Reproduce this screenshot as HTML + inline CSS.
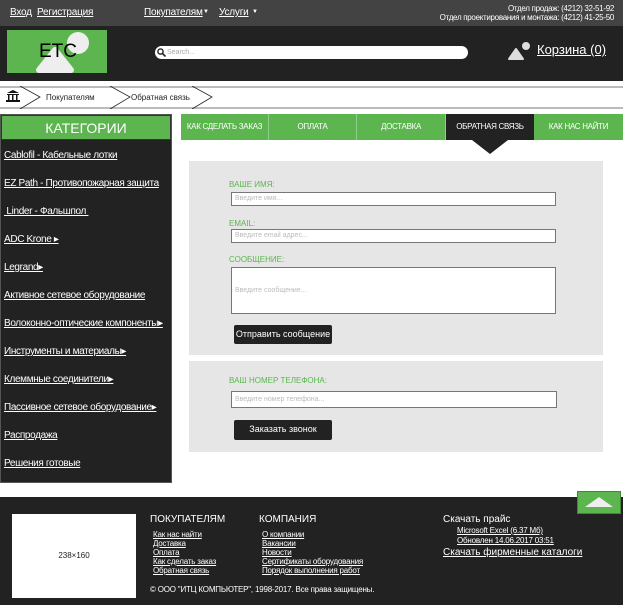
<!DOCTYPE html>
<html><head><meta charset="utf-8"><style>
*{margin:0;padding:0;box-sizing:border-box}
body{width:623px;height:605px;position:relative;background:#fff;font-family:"Liberation Sans",sans-serif;overflow:hidden;color:#fff}
a{color:inherit;text-decoration:underline;white-space:nowrap}
.abs{position:absolute}
#top{left:0;top:0;width:623px;height:26px;background:#434343;font-size:10px;letter-spacing:-0.2px}
#hdr{left:0;top:26px;width:623px;height:55px;background:#222}
#bc{left:0;top:86px;width:623px;height:23px;border-top:2px solid #bbb;border-bottom:2px solid #bbb;color:#222;font-size:8px}
#side{left:0;top:114px;width:172px;height:369px;background:#222;border:1px solid #555}
#side .h{height:25px;background:#5cb54f;text-align:center;font-size:14px;line-height:25px;border:1px solid #333}
#side a{position:absolute;left:3px;font-size:10px;letter-spacing:-0.35px;color:#fff}
.tab{position:absolute;top:114px;height:26px;background:#5cb54f;font-size:8px;letter-spacing:-0.3px;text-align:center;line-height:26px;border-right:1px solid #8fd088;white-space:nowrap}
.panel{position:absolute;left:189px;width:414px;background:#e6e6e6}
.lbl{position:absolute;left:40px;color:#5cb54f;font-size:8px}
.inp{position:absolute;left:42px;width:325px;background:#fff;border:1px solid #777;color:#bbb;font-size:7px;padding-left:3px}
.btn{position:absolute;left:45px;width:98px;height:19px;background:#222;border-radius:2px;font-size:9px;text-align:center;line-height:19px}
#foot{left:0;top:497px;width:623px;height:108px;background:#222}
#foot a,#foot div{position:absolute}
.fl{font-size:8px;letter-spacing:-0.2px}
</style></head><body>
<div id="top" class="abs">
<a class="abs" style="left:10px;top:7px">Вход</a><a class="abs" style="left:37px;top:7px">Регистрация</a>
<a class="abs" style="left:144px;top:7px">Покупателям</a><span class="abs" style="left:203px;top:9px;font-size:6px">▼</span>
<a class="abs" style="left:219px;top:7px">Услуги</a><span class="abs" style="left:252px;top:9px;font-size:6px">▼</span>
<div class="abs" style="right:9px;top:4px;font-size:8px;letter-spacing:-0.3px;text-align:right;line-height:9px">Отдел продаж: (4212) 32-51-92<br>Отдел проектирования и монтажа: (4212) 41-25-50</div>
</div>
<div id="hdr" class="abs">
<div class="abs" style="left:7px;top:4px;width:100px;height:43px;background:#5cb54f">
<svg width="100" height="43" style="position:absolute;left:0;top:0"><circle cx="71" cy="13" r="11" fill="#eee"/><path d="M32 40 L48 20 L64 40 Z" fill="#eee" stroke="#eee" stroke-width="6" stroke-linejoin="round"/></svg>
<span class="abs" style="left:32px;top:11px;color:#000;font-size:19px">ETC</span></div>
<div class="abs" style="left:155px;top:20px;width:313px;height:13px;background:#fff;border-radius:7px;color:#aaa;font-size:7px;line-height:13px;padding-left:12px">Search...
<svg width="9" height="9" style="position:absolute;left:2px;top:2px"><circle cx="3.5" cy="3.5" r="2.6" stroke="#222" stroke-width="1.4" fill="none"/><path d="M5.5 5.5L8.5 8.5" stroke="#222" stroke-width="1.6"/></svg></div>
<svg class="abs" style="left:506px;top:14px" width="26" height="22"><circle cx="20" cy="6" r="4" fill="#ddd"/><path d="M3 19 L10 9 L17 19Z" fill="#ddd" stroke="#ddd" stroke-width="2" stroke-linejoin="round"/></svg>
<a class="abs" style="left:537px;top:16px;font-size:13px">Корзина (0)</a>
</div>
<div id="bc" class="abs">
<svg class="abs" style="left:0;top:-2px" width="623" height="23"><g fill="none" stroke="#222" stroke-width="0.8"><path d="M20 0 L40 11 L20 23"/><path d="M110 0 L130 11 L110 23"/><path d="M192 0 L212 11 L192 23"/></g>
<g fill="#111"><path d="M7 7 L13 4 L19 7Z"/><rect x="7" y="8" width="12" height="1"/><rect x="8" y="9" width="1.5" height="5"/><rect x="12" y="9" width="1.5" height="5"/><rect x="16" y="9" width="1.5" height="5"/><rect x="6" y="14" width="14" height="2"/></g></svg>
<span class="abs" style="left:46px;top:5px">Покупателям</span><span class="abs" style="left:131px;top:5px">Обратная связь</span>
</div>
<div id="side" class="abs"><div class="h">КАТЕГОРИИ</div>
<a style="top:35px">Cablofil - Кабельные лотки</a>
<a style="top:63px">EZ Path - Противопожарная защита</a>
<a style="top:91px">&nbsp;Linder - Фальшпол&nbsp;</a>
<a style="top:119px">ADC Krone ▸</a>
<a style="top:147px">Legrand▸</a>
<a style="top:175px">Активное сетевое оборудование</a>
<a style="top:203px">Волоконно-оптические компоненты▸</a>
<a style="top:231px">Инструменты и материалы▸</a>
<a style="top:259px">Клеммные соединители▸</a>
<a style="top:287px">Пассивное сетевое оборудование▸</a>
<a style="top:315px">Распродажа</a>
<a style="top:343px">Решения готовые</a>
</div>
<div class="tab" style="left:181px;width:88px">КАК СДЕЛАТЬ ЗАКАЗ</div>
<div class="tab" style="left:269px;width:88px">ОПЛАТА</div>
<div class="tab" style="left:357px;width:89px">ДОСТАВКА</div>
<div class="tab" style="left:446px;width:88px;background:#222;border:none">ОБРАТНАЯ СВЯЗЬ</div>
<div class="tab" style="left:534px;width:89px;border:none">КАК НАС НАЙТИ</div>
<svg class="abs" style="left:472px;top:140px" width="36" height="15"><path d="M0 0H36L18 14Z" fill="#222"/></svg>
<div class="panel" style="top:161px;height:194px">
<span class="lbl" style="top:19px">ВАШЕ ИМЯ:</span>
<div class="inp" style="top:31px;height:14px;line-height:12px">Введите имя...</div>
<span class="lbl" style="top:58px">EMAIL:</span>
<div class="inp" style="top:68px;height:14px;line-height:12px">Введите email адрес...</div>
<span class="lbl" style="top:94px">СООБЩЕНИЕ:</span>
<div class="inp" style="top:106px;height:47px;line-height:45px">Введите сообщение...</div>
<div class="btn" style="top:164px">Отправить сообщение</div>
</div>
<div class="panel" style="top:361px;height:91px">
<span class="lbl" style="top:15px">ВАШ НОМЕР ТЕЛЕФОНА:</span>
<div class="inp" style="top:30px;height:17px;line-height:15px;width:326px">Введите номер телефона...</div>
<div class="btn" style="top:59px;height:20px">Заказать звонок</div>
</div>
<div id="foot" class="abs">
<div style="left:12px;top:17px;width:124px;height:84px;background:#fff;color:#222;font-size:8px;text-align:center;line-height:84px">238×160</div>
<div style="left:150px;top:17px;font-size:10px">ПОКУПАТЕЛЯМ</div>
<a class="fl" style="left:153px;top:33px">Как нас найти</a>
<a class="fl" style="left:153px;top:42px">Доставка</a>
<a class="fl" style="left:153px;top:51px">Оплата</a>
<a class="fl" style="left:153px;top:60px">Как сделать заказ</a>
<a class="fl" style="left:153px;top:69px">Обратная связь</a>
<div style="left:259px;top:17px;font-size:10px">КОМПАНИЯ</div>
<a class="fl" style="left:262px;top:33px">О компании</a>
<a class="fl" style="left:262px;top:42px">Вакансии</a>
<a class="fl" style="left:262px;top:51px">Новости</a>
<a class="fl" style="left:262px;top:60px">Сертификаты оборудования</a>
<a class="fl" style="left:262px;top:69px">Порядок выполнения работ</a>
<div style="left:150px;top:88px;font-size:8px;letter-spacing:-0.2px">© ООО "ИТЦ КОМПЬЮТЕР", 1998-2017. Все права защищены.</div>
<div style="left:443px;top:17px;font-size:10px">Скачать прайс</div>
<a class="fl" style="left:457px;top:29px">Microsoft Excel (6.37 Мб)</a>
<a class="fl" style="left:457px;top:39px">Обновлен 14.06.2017 03:51</a>
<a style="left:443px;top:50px;font-size:10px">Скачать фирменные каталоги</a>
</div>
<div class="abs" style="left:577px;top:491px;width:44px;height:23px;background:#5cb54f;border:1px solid #3e8a34">
<svg width="44" height="23" style="position:absolute;left:-1px;top:-1px"><path d="M8 16 L22 6 L36 16Z" fill="#eee"/></svg></div>
</body></html>
